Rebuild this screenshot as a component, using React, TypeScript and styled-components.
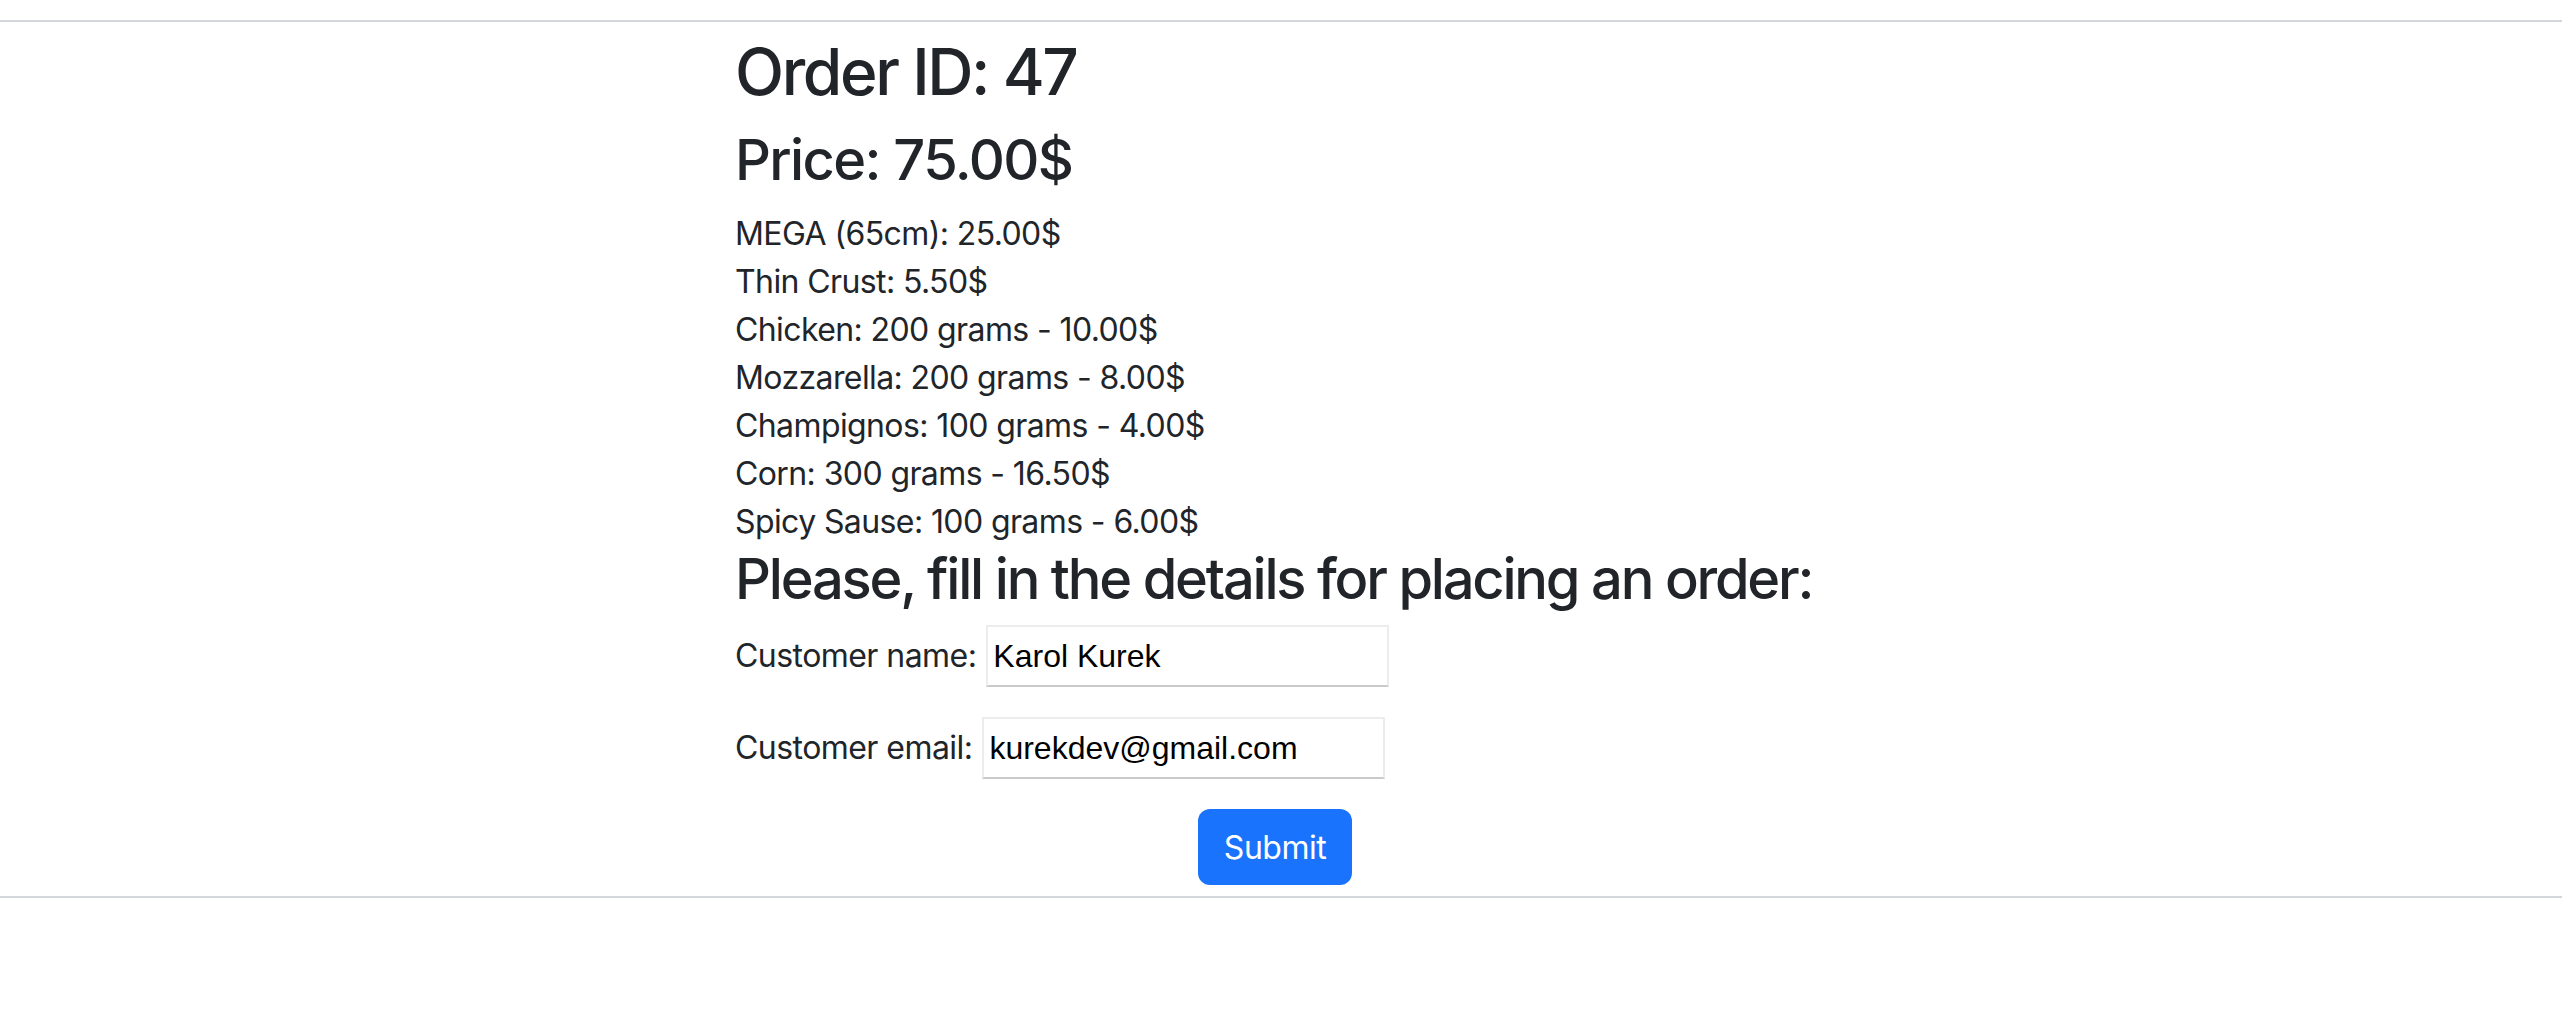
import React from "react";
import styled, { createGlobalStyle } from "styled-components";

const GlobalStyle = createGlobalStyle`
  html, body {
    margin: 0;
    padding: 0;
    background: #ffffff;
  }
  body {
    font-family: Inter, "Noto Sans", "Liberation Sans", sans-serif;
    color: #212529;
  }
`;

const Page = styled.div`
  padding-top: 20px;
  min-height: 1030px;
  box-sizing: border-box;
`;

const Rule = styled.hr`
  margin: 0;
  border: none;
  height: 2px;
  background: #d3d6db;
`;

const Column = styled.main`
  width: 1092px;
  margin: 0 auto;
`;

const Title = styled.h2`
  margin: 12px 0 16px;
  font-size: 64px;
  line-height: 1.2;
  font-weight: 500;
  letter-spacing: -2.4px;
`;

const Subtitle = styled.h3<{ $gap: number; $tracking: number }>`
  margin: 0 0 ${(p) => p.$gap}px;
  font-size: 56px;
  line-height: 1.2;
  font-weight: 500;
  letter-spacing: ${(p) => p.$tracking}px;
  white-space: nowrap;
`;

const ItemList = styled.div`
  display: flex;
  flex-direction: column;
`;

const Item = styled.div`
  font-size: 32px;
  line-height: 48px;
  letter-spacing: -0.6px;
`;

const Form = styled.form`
  display: flex;
  flex-direction: column;
`;

const FieldRow = styled.div`
  display: flex;
  align-items: center;
  gap: 10px;
  height: 62px;
  margin-bottom: 30px;
`;

const Label = styled.label`
  font-size: 32px;
  line-height: 48px;
  letter-spacing: -0.55px;
`;

const TextInput = styled.input`
  box-sizing: border-box;
  width: 403px;
  height: 62px;
  padding: 0 5px;
  border: 2px solid #ececec;
  border-bottom-color: #cacaca;
  border-radius: 0;
  background: #ffffff;
  font-family: "Liberation Sans", Arial, sans-serif;
  font-size: 32px;
  color: #000000;
  outline: none;
`;

const Actions = styled.div`
  display: flex;
  justify-content: center;
  padding-right: 12px;
  margin-bottom: 11px;
`;

const SubmitButton = styled.button`
  width: 154px;
  height: 76px;
  border: none;
  border-radius: 12px;
  background: #1a73fc;
  color: #ffffff;
  font-family: Inter, "Noto Sans", sans-serif;
  font-size: 32px;
  font-weight: 400;
  letter-spacing: -0.5px;
  cursor: pointer;
`;

const items = [
  "MEGA (65cm): 25.00$",
  "Thin Crust: 5.50$",
  "Chicken: 200 grams - 10.00$",
  "Mozzarella: 200 grams - 8.00$",
  "Champignos: 100 grams - 4.00$",
  "Corn: 300 grams - 16.50$",
  "Spicy Sause: 100 grams - 6.00$",
];

export default function App() {
  return (
    <Page>
      <GlobalStyle />
      <Rule />
      <Column>
        <Title>Order ID: 47</Title>
        <Subtitle $gap={16} $tracking={-1.6}>
          Price: 75.00$
        </Subtitle>
        <ItemList>
          {items.map((t) => (
            <Item key={t}>{t}</Item>
          ))}
        </ItemList>
        <Subtitle $gap={12} $tracking={-2.2}>
          Please, fill in the details for placing an order:
        </Subtitle>
        <Form onSubmit={(e) => e.preventDefault()}>
          <FieldRow>
            <Label htmlFor="name">Customer name:</Label>
            <TextInput id="name" type="text" defaultValue="Karol Kurek" />
          </FieldRow>
          <FieldRow>
            <Label htmlFor="email">Customer email:</Label>
            <TextInput id="email" type="email" defaultValue="kurekdev@gmail.com" />
          </FieldRow>
          <Actions>
            <SubmitButton type="submit">Submit</SubmitButton>
          </Actions>
        </Form>
      </Column>
      <Rule />
    </Page>
  );
}
